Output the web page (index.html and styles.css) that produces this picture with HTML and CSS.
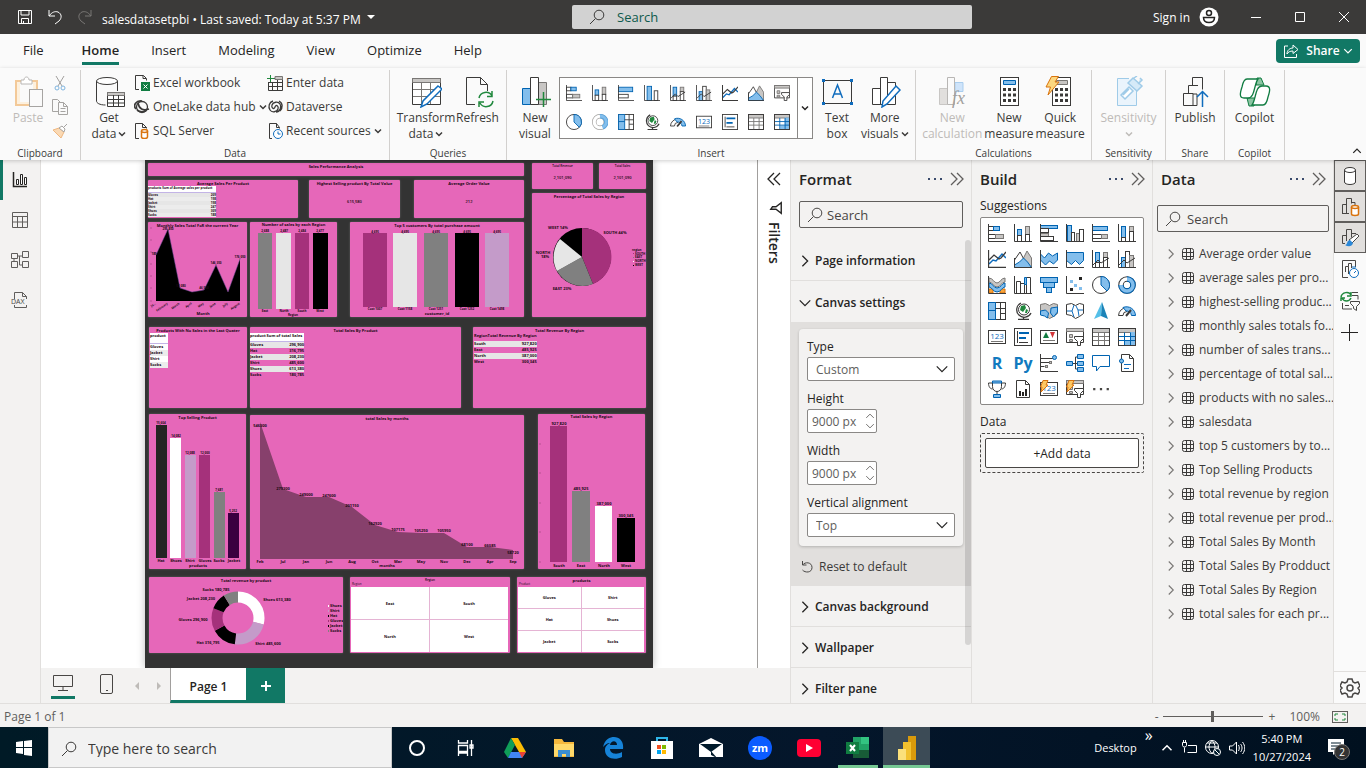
FILE: index.html
```html
<!DOCTYPE html>
<html lang="en">
<head>
<meta charset="utf-8">
<title>salesdatasetpbi - Power BI Desktop</title>
<link rel="stylesheet" href="styles.css">
</head>
<body>
<svg class="defs" aria-hidden="true">
  <symbol id="chev-r" viewBox="0 0 16 16"><path class="cur" d="M5 2l6 6-6 6"/></symbol>
  <symbol id="chev-d" viewBox="0 0 16 16"><path class="cur" d="M2 5l6 6 6-6"/></symbol>
  <symbol id="chev-u" viewBox="0 0 16 16"><path class="cur" d="M2 11l6-6 6 6"/></symbol>
  <symbol id="dbl-r" viewBox="0 0 16 16"><path class="cur" d="M2 2l6 6-6 6M8 2l6 6-6 6"/></symbol>
  <symbol id="dbl-l" viewBox="0 0 16 16"><path class="cur" d="M8 2L2 8l6 6M14 2L8 8l6 6"/></symbol>
  <symbol id="dots3" viewBox="0 0 16 16"><path d="M1 7h2v2H1zM7 7h2v2H7zM13 7h2v2h-2z" fill="currentColor"/></symbol>
  <symbol id="mag" viewBox="0 0 16 16"><circle class="cur" cx="10" cy="6" r="4.8"/><path class="cur" d="M6.500 9.500L1 15"/></symbol>
  <symbol id="funnel" viewBox="0 0 16 16"><path class="cur" d="M2 2h12L9.500 8v6l-3-2V8z"/></symbol>
  <symbol id="db" viewBox="0 0 20 20"><path d="M4.500 4v12c0 1.500 2.500 2.500 5.500 2.500s5.500-1 5.500-2.500V4" fill="#fff" stroke="#3b3a39"/><ellipse cx="10" cy="4" rx="5.500" ry="2.500" fill="#fff" stroke="#3b3a39"/></symbol>
  <symbol id="tbl" viewBox="0 0 14 14"><rect class="k" x="1.500" y="1.500" width="11" height="11" rx="2"/><path class="k" d="M5.500 1v12M9.500 1v12M1 5.500h12M1 9.500h12"/></symbol>

  <symbol id="bar-stack" viewBox="0 0 18 18"><rect class="w" x=".5" y="2.500" width="5" height="4"/><rect class="b" x="5.500" y="2.500" width="6" height="4"/><rect class="w" x=".5" y="10.500" width="7" height="4"/><rect class="g" x="7.500" y="10.500" width="8" height="4"/><path class="k" d="M.5 0v17.500H18"/></symbol>
  <symbol id="col-stack" viewBox="0 0 18 18"><rect class="b" x="3.500" y="5.500" width="4" height="6"/><rect class="w" x="3.500" y="11.500" width="4" height="6"/><rect class="g" x="11.500" y="2.500" width="4" height="8"/><rect class="w" x="11.500" y="10.500" width="4" height="7"/><path class="k" d="M.5 0v17.500H18"/></symbol>
  <symbol id="bar-clus" viewBox="0 0 18 18"><rect class="b" x=".5" y="1.500" width="17" height="3"/><rect class="w" x=".5" y="4.500" width="8" height="4"/><rect class="g" x=".5" y="9.500" width="8" height="3"/><rect class="w" x=".5" y="12.500" width="13" height="4"/><path class="k" d="M.5 0v17.500H18"/></symbol>
  <symbol id="col-clus" viewBox="0 0 18 18"><rect class="b" x="1.500" y="1.500" width="4" height="16"/><rect class="w" x="5.500" y="8.500" width="3" height="9"/><rect class="g" x="10.500" y="9.500" width="3" height="8"/><rect class="w" x="13.500" y="5.500" width="4" height="12"/><path class="k" d="M.5 0v17.500H18"/></symbol>
  <symbol id="bar-simple" viewBox="0 0 18 18"><rect class="b" x=".5" y="2.500" width="16" height="5"/><rect class="w" x=".5" y="10.500" width="11" height="4"/><path class="k" d="M.5 0v17.500H18"/></symbol>
  <symbol id="col-simple" viewBox="0 0 18 18"><rect class="b" x="3.500" y="1.500" width="5" height="16"/><rect class="w" x="11.500" y="6.500" width="4" height="11"/><path class="k" d="M.5 0v17.500H18"/></symbol>
  <symbol id="bar-100" viewBox="0 0 18 18"><rect class="b" x=".5" y="2.500" width="15" height="4"/><rect class="w" x=".5" y="10.500" width="9" height="4"/><rect class="g" x="9.500" y="10.500" width="6" height="4"/><path class="k" d="M.5 0v17.500H18"/></symbol>
  <symbol id="col-100" viewBox="0 0 18 18"><rect class="b" x="3.500" y="2.500" width="4" height="11"/><rect class="w" x="3.500" y="13.500" width="4" height="4"/><rect class="g" x="11.500" y="2.500" width="4" height="5"/><rect class="w" x="11.500" y="7.500" width="4" height="10"/><path class="k" d="M.5 0v17.500H18"/></symbol>
  <symbol id="line" viewBox="0 0 18 18"><path class="bl" d="M1 14l4-4 3 1 6-7 4 4" stroke-width="1.500"/><path class="k" d="M1 10l5-5 5 4 2-1 5-6M.5 0v17.500H18" stroke-width="1.300"/></symbol>
  <symbol id="area" viewBox="0 0 18 18"><path class="g" d="M9 9l4-8 4.500 7v9H11z"/><path class="w" d="M.5 10L6 2l8 15H.5z"/><path class="b" d="M.5 15l5-3 4-4 4 4 4 5.500H.5z"/><path class="k" d="M.5 8v9.500H18"/></symbol>
  <symbol id="area-stack" viewBox="0 0 18 18"><path class="b" d="M.5 4l4 4 4-5 4 3 5-3v7l-4 4-4-3-4 4-5-5z"/><path class="k" d="M.5 0v17.500H18"/></symbol>
  <symbol id="area-100" viewBox="0 0 18 18"><path class="b" d="M.5 2.500h17v8l-4 4-4-4-4 4-5-4z"/><path class="k" d="M.5 0v17.500H18"/></symbol>
  <symbol id="combo1" viewBox="0 0 18 18"><rect class="b" x="3.500" y="2.500" width="4" height="10"/><rect class="w" x="3.500" y="12.500" width="4" height="5"/><rect class="g" x="11.500" y="2.500" width="4" height="5"/><rect class="w" x="11.500" y="7.500" width="4" height="10"/><path class="k" d="M1 15l5-5 3 3 8-5M.5 0v17.500H18"/></symbol>
  <symbol id="combo2" viewBox="0 0 18 18"><rect class="b" x="3.500" y="7.500" width="4" height="10"/><rect class="w" x="7.500" y="1.500" width="4" height="16"/><rect class="g" x="11.500" y="5.500" width="4" height="12"/><path class="k" d="M1 15l5-5 3 3 8-5M.5 0v17.500H18"/></symbol>
  <symbol id="ribbonc" viewBox="0 0 18 18"><path d="M1 13h4v4H1zM12 13h5v4h-5z" fill="#f7a43c" stroke="#d9730d"/><path class="g" d="M1 2c4 0 5 5 8 5s4-5 8-5v4c-4 0-4 5-8 5S5 6 1 6z"/><path class="b" d="M1 7c4 0 4 5 8 5s5-5 8-5v4c-3 0-4 5-8 5s-5-5-8-5z"/><path class="k" d="M.5 0v17.500H18"/></symbol>
  <symbol id="waterfall" viewBox="0 0 18 18"><path class="w" d="M2.500 5.500h4v12h-4zM6.500 7.500h4v10M12.500 1.500h4v16h-4z"/><path class="b" d="M10.500 1.500h2v7h-2z"/><path class="k" d="M.5 0v17.500H18"/></symbol>
  <symbol id="funnelc" viewBox="0 0 18 18"><rect class="b" x=".5" y="1.500" width="17" height="5"/><rect class="b" x="3.500" y="6.500" width="11" height="5"/><rect class="b" x="6.500" y="11.500" width="5" height="5"/></symbol>
  <symbol id="scatter" viewBox="0 0 18 18"><path class="k" d="M.5 0v17.500H18"/><path fill="#83beec" d="M4 4h3v3H4zM8 8h3v3H8zM13 11h3v3h-3z"/><path fill="#252423" d="M13 1h3v3h-3zM4 12h3v3H4z"/></symbol>
  <symbol id="pie" viewBox="0 0 18 18"><circle class="w" cx="9" cy="9" r="8.500"/><path class="b" d="M9 .5A8.500 8.500 0 0 1 15 15L9 9z"/></symbol>
  <symbol id="donut" viewBox="0 0 18 18"><circle cx="9" cy="9" r="6" fill="none" stroke="#3b3a39" stroke-width="5.500"/><circle cx="9" cy="9" r="6" fill="none" stroke="#fff" stroke-width="3.500"/><path d="M9 3A6 6 0 1 1 3 9" fill="none" stroke="#0063b1" stroke-width="5.500"/><path d="M9 3A6 6 0 1 1 3 9" fill="none" stroke="#83beec" stroke-width="3.500"/></symbol>
  <symbol id="donut-light" viewBox="0 0 18 18"><circle cx="9" cy="9" r="6.500" fill="none" stroke="#a19f9d" stroke-width="5"/><circle cx="9" cy="9" r="6.500" fill="none" stroke="#fff" stroke-width="3.500"/><path d="M9 2.500A6.500 6.500 0 0 1 12 15" fill="none" stroke="#5da5dd" stroke-width="5"/><path d="M9 2.500A6.500 6.500 0 0 1 12 15" fill="none" stroke="#83beec" stroke-width="3"/></symbol>
  <symbol id="tree" viewBox="0 0 18 18"><rect class="w" x=".5" y=".5" width="17" height="17"/><path class="b" d="M.5.500h7v17h-7z"/><path d="M.5 8.500h7" stroke="#0063b1"/><path class="k" d="M7.500 6.500h10M12.500 6.500v11M12.500 11.500h5M12.500.500v6"/></symbol>
  <symbol id="globe" viewBox="0 0 18 18"><circle class="w" cx="10" cy="7.500" r="5.500"/><path d="M7 4l4-1 1 3-3 4-3-2zM12 7l2 1-1 3h-2z" fill="#20883d"/><path class="k" d="M7 1a7.500 7.500 0 1 0 10 10M9.500 15v2M4 17.500h11" stroke-width="1.300"/></symbol>
  <symbol id="map" viewBox="0 0 18 18"><path class="g" d="M.5 2.500l5-1 4 2 4-2 4 1v9l-4 3-4 2-4-3-5-1z"/><path class="b" d="M.5 9l5-1 3 3-1 5-3-2-4-1zM11 6l6.500-1v5l-4 5-3-4z"/></symbol>
  <symbol id="shapemap" viewBox="0 0 18 18"><path class="w" d="M.5 2.500l5-1 4 2 4-2 4 1v9l-4 3-4 2-4-3-5-1z"/><path class="bl" d="M1 9h5l2-6M6 9l2 6M17 8h-5l-2-4M12 8l1 6"/></symbol>
  <symbol id="azure" viewBox="0 0 18 18"><path d="M10 0L2 17l7-3z" fill="#54bfe8"/><path d="M10 0l6 17-7-3z" fill="#1b83b8"/></symbol>
  <symbol id="gauge" viewBox="0 0 18 18"><path class="w" d="M.5 13.500a8.500 8.500 0 0 1 8.500-8v4a4 4 0 0 0-4 4z"/><path class="b" d="M5 5.500a9 9 0 0 1 12.500 8h-4A5 5 0 0 0 8 9z"/><path class="k" d="M8 14l5-6" stroke-width="2"/></symbol>
  <symbol id="card" viewBox="0 0 18 18"><rect class="w" x=".5" y="2.500" width="17" height="13"/><text x="9" y="11" text-anchor="middle" class="n123">123</text><path d="M3 13.500h12" stroke="#797775"/></symbol>
  <symbol id="mrow" viewBox="0 0 18 18"><rect class="w" x=".5" y=".5" width="17" height="17"/><path class="k" d="M3.500 3v12"/><path d="M5 5h10M5 10h7" stroke="#0063b1" stroke-width="2"/><path class="k" d="M5 14.500h9"/></symbol>
  <symbol id="kpi" viewBox="0 0 18 18"><rect class="w" x=".5" y="2.500" width="17" height="13"/><path d="M3 10l3-6 3 6z" fill="#107c41"/><path d="M10 4h5l-2.500 6z" fill="#d13438"/><path d="M3 12.500h12" stroke="#797775"/></symbol>
  <symbol id="slicer" viewBox="0 0 18 18"><path class="w" d="M.5.500h17v14H.5z"/><path class="g" d="M.5.500h17v3H.5zM3.500 6.500h3v3h-3zM3.500 11.500h3v2h-3z"/><path class="w" d="M8.500 8.500h9v2l-3 3v4h-3v-4l-3-3z"/></symbol>
  <symbol id="grid" viewBox="0 0 18 18"><rect class="w" x=".5" y=".5" width="17" height="17"/><path class="g" d="M.5.500h17v4H.5z"/><path d="M6.500 4.500v13M12.500 4.500v13M.5 8.500h17M.5 12.500h17" stroke="#797775"/><rect class="k" x=".5" y=".5" width="17" height="17"/></symbol>
  <symbol id="matrix" viewBox="0 0 18 18"><rect class="w" x=".5" y=".5" width="17" height="17"/><path class="g" d="M.5.500h17v4H.5z"/><path fill="#83beec" d="M12 4h5v13H7v-4h5z"/><path d="M6.500 4.500v13M12.500 4.500v13M.5 8.500h17M.5 12.500h17" stroke="#0063b1"/><rect class="k" x=".5" y=".5" width="17" height="17"/></symbol>
  <symbol id="ki" viewBox="0 0 18 18"><path class="k" d="M.5 0v17.500H18M.5 4.500h13M.5 8.500h9M.5 12.500h4"/><circle class="b" cx="14.500" cy="3.500" r="2"/><rect class="g" x="9.500" y="7.500" width="2" height="2"/><rect class="g" x="5.500" y="11.500" width="2" height="2"/></symbol>
  <symbol id="decomp" viewBox="0 0 18 18"><path class="k" d="M6 9.500h6M9.500 3v12M9.500 3H12M9.500 15H12"/><path class="b" d="M.5 7.500h6v4h-6zM11.500.500h6v4h-6zM11.500 7.500h6v4h-6zM11.500 13.500h6v4h-6z"/></symbol>
  <symbol id="qna" viewBox="0 0 18 18"><path d="M.5 1.500h17v11H8L4.500 17v-4.500h-4z" fill="#fff" stroke="#0063b1"/></symbol>
  <symbol id="narr" viewBox="0 0 18 18"><path class="w" d="M3.500.500h8l4 4v13h-12z"/><path class="k" d="M11.500.500v4h4"/><circle class="b" cx="3.500" cy="7" r="2"/><path class="bl" d="M6 10.500h7M6 14.500h5"/></symbol>
  <symbol id="cup" viewBox="0 0 18 18"><path class="w" d="M4.500 1.500h9v5c0 3-2 5-4.500 5s-4.500-2-4.500-5zM4.500 3H.5c0 4 2 6 4 6M13.500 3h4c0 4-2 6-4 6M9 11.500v3"/><path class="b" d="M4.500 1h9v2h-9zM5.500 14.500h7v3h-7z"/></symbol>
  <symbol id="pag" viewBox="0 0 18 18"><path class="w" d="M2.500.500h9l4 4v13h-13z"/><path class="k" d="M11.500.500v4h4"/><path d="M5 11h2v5H5zM8 12h2v4H8zM11 9h2v7h-2z" fill="#252423"/></symbol>
  <symbol id="appcard" viewBox="0 0 18 18"><use href="#card"/><path d="M3 .5h5L6 5h2L1 12l1-5H.5z" fill="#fcc865" stroke="#d9730d"/></symbol>
  <symbol id="appslicer" viewBox="0 0 18 18"><use href="#slicer"/><path d="M3 .5h5L6 5h2L1 12l1-5H.5z" fill="#fcc865" stroke="#d9730d"/></symbol>
</svg>

<header class="titlebar">
  <div class="tb-left">
    <button class="tb-btn" aria-label="Save"><svg class="i16" viewBox="0 0 16 16"><path class="cur" d="M1.500 1.500h13v13h-13zM4 1.500V6h8V1.500M4.500 14.500v-5h7v5M6.500 12v2"/></svg></button>
    <button class="tb-btn" aria-label="Undo"><svg class="i16" viewBox="0 0 16 16"><path class="cur" d="M2 1v6h6M2 7c3-4 6-5 9-4 4 2 4 6 1 9l-4 3"/></svg></button>
    <button class="tb-btn dim" aria-label="Redo"><svg class="i16" viewBox="0 0 16 16"><path class="cur" d="M14 1v6H8M14 7c-3-4-6-5-9-4-4 2-4 6-1 9l4 3"/></svg></button>
    <span class="doc">salesdatasetpbi • Last saved: Today at 5:37 PM</span>
    <svg class="tri" viewBox="0 0 8 4"><path d="M0 0h8L4 4z" fill="#fff"/></svg>
  </div>
  <label class="tb-search"><svg class="i16"><use href="#mag"/></svg><input type="text" placeholder="Search" aria-label="Search"></label>
  <div class="tb-right">
    <a href="#" class="signin">Sign in</a>
    <svg class="i20" viewBox="0 0 20 20"><circle cx="10" cy="10" r="9.500" fill="#fff"/><circle cx="10" cy="6" r="2.500" fill="none" stroke="#252423" stroke-width="1.500"/><path d="M4.500 10.500h11c0 3-2 5-5.500 5s-5.500-2-5.500-5z" fill="none" stroke="#252423" stroke-width="1.500"/></svg>
    <button class="win" aria-label="Minimize"><svg class="i12" viewBox="0 0 12 12"><path class="cur" d="M1 6.500h10"/></svg></button>
    <button class="win" aria-label="Maximize"><svg class="i12" viewBox="0 0 12 12"><path class="cur" d="M1.500 1.500h9v9h-9z"/></svg></button>
    <button class="win" aria-label="Close"><svg class="i12" viewBox="0 0 12 12"><path class="cur" d="M1 1l10 10M11 1L1 11"/></svg></button>
  </div>
</header>

<nav class="tabs">
  <a href="#">File</a><a href="#" class="on">Home</a><a href="#">Insert</a><a href="#">Modeling</a><a href="#">View</a><a href="#">Optimize</a><a href="#">Help</a>
  <button class="share"><svg class="i16" viewBox="0 0 16 16"><path class="cur" d="M5 3H1.500v11.500h12V11M4 11c0-4 3-6 6-6V2l5 4.500-5 4V8C7 8 5 9 4 11z"/></svg>Share<svg class="i10"><use href="#chev-d"/></svg></button>
</nav>

<section class="ribbon">
  <div class="grp g-clip"><div class="row">
    <button class="big off"><svg class="i32" viewBox="0 0 32 32"><path d="M4 5h21v24H4z" fill="#fdf0dd" stroke="#f3c998" stroke-width="2"/><path d="M8 7h13v19H8z" fill="#fafafa"/><path d="M9 8V4h3c0-4 5-4 5 0h3v4z" fill="#fff" stroke="#b8b6b4"/><rect x="17.500" y="13.500" width="13" height="17" fill="#fafafa" stroke="#a6a4a2"/></svg>Paste</button>
    <div class="col minis">
      <button class="mini" aria-label="Cut"><svg class="i16" viewBox="0 0 16 16"><path d="M4 1l6 10M12 1L6 11" stroke="#a19f9d"/><circle cx="5" cy="13" r="2" fill="none" stroke="#7fb4df"/><circle cx="11" cy="13" r="2" fill="none" stroke="#7fb4df"/></svg></button>
      <button class="mini" aria-label="Copy"><svg class="i16" viewBox="0 0 16 16"><path d="M6 12.500H.5v-12h5l3 3M6.500 3.500h5l4 4v8h-9zM11.500 3.500v4h4M8.500 9.500h5M8.500 12.500h5" fill="none" stroke="#a6a4a2"/></svg></button>
      <button class="mini" aria-label="Format painter"><svg class="i16" viewBox="0 0 16 16"><path d="M1 7l6-2 5 4-3 6z" fill="#fad9b4" stroke="#efb780"/><path d="M7 5l3-2 3 3-1 3zM12 4l3-3" fill="#fff" stroke="#a6a4a2"/></svg></button>
    </div></div><h2>Clipboard</h2></div>
  <div class="grp g-data"><div class="row">
    <button class="big"><svg class="i32" viewBox="0 0 32 32"><path class="k" d="M3.500 5v20c0 2 3 4 9 4M24.500 5v10"/><ellipse class="w" cx="14" cy="5" rx="10.500" ry="3.500"/><path class="w" d="M14.500 16.500h17v14h-17z"/><path class="g" d="M14.500 16.500h17v3h-17z"/><path class="k" d="M20.500 19v11M25.500 19v11M14.500 23.500h17M14.500 27h17"/></svg>Get<br>data<svg class="i8"><use href="#chev-d"/></svg></button>
    <div class="col c1">
      <button class="small"><svg class="i16" viewBox="0 0 16 16"><path class="k" d="M5 14.500H1.500V.500h8l3 3v2M9 .5v3h3"/><rect x="7" y="7" width="9" height="9" fill="#107c41"/><path d="M9.500 9.500l4 4M13.500 9.500l-4 4" stroke="#fff"/></svg>Excel workbook</button>
      <button class="small"><svg class="i16" viewBox="0 0 16 16"><circle cx="8" cy="8" r="5.500" fill="none" stroke="#3b3a39" stroke-width="1.300"/><path d="M2 10a6 5 0 0 1 6-8M4 4c1 6 5 8 11 6M3 11c4 3 9 2 10-1" fill="none" stroke="#3b3a39" stroke-width="1.700"/></svg>OneLake data hub<svg class="i8"><use href="#chev-d"/></svg></button>
      <button class="small"><svg class="i16" viewBox="0 0 16 16"><path class="k" d="M5 15.500H1.500V.500h7l4 4v1M8.500.500v4h4"/><path d="M7.500 8v6c0 2 6 2 6 0V8" fill="#fff" stroke="#d9730d" stroke-width="1.500"/><ellipse cx="10.500" cy="8" rx="3" ry="1.500" fill="#fff" stroke="#d9730d" stroke-width="1.500"/></svg>SQL Server</button>
    </div>
    <div class="col">
      <button class="small"><svg class="i16" viewBox="0 0 16 16"><path class="k" d="M4 3.500h11.500v12h-14V7M5.500 7v8M10.500 3.500v12M1.500 7.500h14M1.500 11.500h14"/><path class="g" d="M8 1.500h7.500v3H8z"/><path d="M3.500 0v7M0 3.500h7" stroke="#20883d"/></svg>Enter data</button>
      <button class="small"><svg class="i16" viewBox="0 0 16 16"><path d="M8 8c-1 3-4 1-3-2s6-4 8-1 0 8-4 8M8 8c1-3 4-1 3 2s-6 4-8 1-1-8 3-9M12 2c4 2 4 7 1 10" fill="none" stroke="#3b3a39" stroke-width="1.300"/></svg>Dataverse</button>
      <button class="small"><svg class="i16" viewBox="0 0 16 16"><path class="k" d="M5 15.500H2.500V.500h7l3 4v1M9.500.500v4h3"/><circle cx="11" cy="11" r="4.500" fill="#fff" stroke="#0f6cbd"/><path d="M11 8.500V11h2.500" fill="none" stroke="#0f6cbd"/></svg>Recent sources<svg class="i8"><use href="#chev-d"/></svg></button>
    </div></div><h2>Data</h2></div>
  <div class="grp g-query"><div class="row">
    <button class="big"><svg class="i32" viewBox="0 0 32 32"><path class="w" d="M2.500 2.500h28v26h-28z"/><path class="g" d="M2.500 2.500h28v4h-28z"/><path d="M11.500 7v21M20.500 7v21M3 13.500h27M3 20.500h27" stroke="#797775"/><path d="M28 10l4 3-15 15-6 3 2-6z" fill="#fff" stroke="#0f6cbd" stroke-width="1.500"/></svg>Transform<br>data<svg class="i8"><use href="#chev-d"/></svg></button>
    <button class="big"><svg class="i32" viewBox="0 0 32 32"><path class="k" d="M13 28.500H4.500v-27h14l7 7V15M18.500 1.500v7h7"/><path d="M17 22a7 7 0 0 1 13-2M30 15v5.500h-5M31 25a7 7 0 0 1-13 2M17 31v-5h5" fill="none" stroke="#20883d" stroke-width="1.500"/></svg>Refresh</button>
  </div><h2>Queries</h2></div>
  <div class="grp g-insert"><div class="row">
    <button class="big"><svg class="i32" viewBox="0 0 32 32"><path class="b" d="M3.500 12.500h9v16h-9z"/><path class="g" d="M19.500 6.500h8v22h-8z"/><path class="w" d="M11.500 1.500h8v27h-8z"/><path d="M24.500 16v15M17 23.500h15" stroke="#20883d" stroke-width="1.500"/></svg>New<br>visual</button>
    <div class="gallery"><div class="gal">
      <svg><use href="#bar-stack"/></svg><svg><use href="#col-stack"/></svg><svg><use href="#bar-simple"/></svg><svg><use href="#col-simple"/></svg><svg><use href="#combo1"/></svg><svg><use href="#combo2"/></svg><svg><use href="#line"/></svg><svg><use href="#area"/></svg><svg><use href="#slicer"/></svg>
      <svg><use href="#pie"/></svg><svg><use href="#donut-light"/></svg><svg><use href="#tree"/></svg><svg><use href="#globe"/></svg><svg><use href="#gauge"/></svg><svg><use href="#card"/></svg><svg><use href="#mrow"/></svg><svg><use href="#grid"/></svg><svg><use href="#matrix"/></svg>
    </div><button class="more" aria-label="More visuals"><svg class="i8"><use href="#chev-d"/></svg></button></div>
    <button class="big b-text"><svg class="i32" viewBox="0 0 32 32"><rect class="k" x="2.500" y="4.500" width="28" height="23"/><path d="M1 3h3v3H1zM29 3h3v3h-3zM1 26h3v3H1zM29 26h3v3h-3z" fill="#0f6cbd"/><path d="M11.500 22l5-13 5 13M13 18h7" fill="none" stroke="#0f6cbd" stroke-width="1.500"/></svg>Text<br>box</button>
    <button class="big"><svg class="i32" viewBox="0 0 32 32"><path class="w" d="M3.500 12.500h8v16h-8zM18.500 6.500h8v22h-8zM11.500 1.500h7v27h-7z"/><path d="M27 10l4 4-13 14-5 3 1-6z" fill="#fff" stroke="#0f6cbd" stroke-width="1.500"/></svg>More<br>visuals<svg class="i8"><use href="#chev-d"/></svg></button>
  </div><h2>Insert</h2></div>
  <div class="grp g-calc"><div class="row">
    <button class="big off"><svg class="i32" viewBox="0 0 32 32"><path d="M3.500 12.500h8v16h-8z" fill="#e1dfdd" stroke="#c8c6c4"/><path d="M19 6.500h8v9h-8z" fill="#cfe4fa" stroke="#a9cdee"/><path d="M11.500 1.500h7v27h-7z" fill="#fafafa" stroke="#b8b6b4"/><text x="16" y="28" class="fx">fx</text></svg>New<br>calculation</button>
    <button class="big"><svg class="i32" viewBox="0 0 32 32"><rect class="w" x="7.500" y="1.500" width="18" height="28"/><path class="b" d="M10.500 4.500h12v4h-12z"/><path d="M11.500 12v14M16.500 12v14M21.500 12v14" stroke="#3b3a39" stroke-width="3" stroke-dasharray="3 2.500"/></svg>New<br>measure</button>
    <button class="big"><svg class="i32" viewBox="0 0 32 32"><rect class="w" x="8.500" y="1.500" width="18" height="28"/><path class="g" d="M12.500 4.500h11v4h-11z"/><path d="M12.500 12v14M17.500 12v14M22.500 12v14" stroke="#3b3a39" stroke-width="3" stroke-dasharray="3 2.500"/><path d="M7.500.500h7L11 6h4L4 19l2.500-8H2z" fill="#fcd77f" stroke="#d9730d"/></svg>Quick<br>measure</button>
  </div><h2>Calculations</h2></div>
  <div class="grp g-sens"><div class="row"><button class="big off"><svg class="i32" viewBox="0 0 32 32"><path d="M17 2.500H5.500v27h19V15" fill="#eaf4fc" stroke="#9fcbe8"/><path d="M9 19l8-8 4 4-8 8zM11 19l6-6" fill="#fff" stroke="#9fcbe8" stroke-width="1.500"/><path d="M16 7l5-5 9 8-5 5zM22 2l3-2M28 2l2 2-4 4" fill="#d5eaf8" stroke="#9fcbe8" stroke-width="1.500"/></svg>Sensitivity<br><svg class="i8"><use href="#chev-d"/></svg></button></div><h2>Sensitivity</h2></div>
  <div class="grp g-share"><div class="row"><button class="big"><svg class="i32" viewBox="0 0 32 32"><path class="k" d="M14 29.500H4.500v-12h9.500v12zM9.500 17v-7.500H19M13.500 9.500v-8h10v12M14 18h4v11.500h-4"/><path d="M23.500 31V16M18 21l5.500-5.500L29 21" fill="none" stroke="#0f6cbd" stroke-width="1.500"/></svg>Publish</button></div><h2>Share</h2></div>
  <div class="grp g-cop"><div class="row"><button class="big"><svg class="i32" viewBox="0 0 32 32"><path d="M18 2h4l3 7h-8zM8 22h9l-2 8h-5z" fill="#8cc5a3" stroke="#107c41"/><path d="M8 3h11c-4 5-3 19-10 19H5c-5 0-4-5-2-11 1-5 2-8 5-8zM24 29H13c4-5 3-19 10-19h4c5 0 4 5 2 11-1 5-2 8-5 8z" fill="#fff" stroke="#107c41" stroke-width="1.300"/></svg>Copilot</button></div><h2>Copilot</h2></div>
  <button class="collapse" aria-label="Collapse ribbon"><svg class="i10"><use href="#chev-u"/></svg></button>
</section>

<main>
  <nav class="rail">
    <button class="on" aria-label="Report view"><svg class="i16" viewBox="0 0 16 16"><path d="M1.500 0v14.500H15" fill="none" stroke="#252423" stroke-width="1.500"/><path d="M4.500 7.500h2v5h-2zM8.500 2.500h2v10h-2zM12.500 5.500h2v7h-2z" fill="#fff" stroke="#252423"/></svg></button>
    <button aria-label="Table view"><svg class="i16" viewBox="0 0 16 16"><path d="M.5.500h15v15H.5zM.5 4.500h15M.5 10h15M5.500 4.500v11M10.500 4.500v11" fill="none" stroke="#605e5c"/></svg></button>
    <button aria-label="Model view"><svg class="i18" viewBox="0 0 18 18"><path d="M.5 2.500h6v5h-6zM11.500.500h6v6h-6zM11.500 10.500h6v6h-6zM.5 10.500h6v6h-6zM6.500 5h5M8.500 5v9h3M3 8v2" fill="none" stroke="#605e5c"/></svg></button>
    <button aria-label="DAX query view"><svg class="i18" viewBox="0 0 18 18"><path d="M3.500 8V1.500h8l4 4V8M11.500 1.500v4h4M3.500 14v2.500h12V14" fill="none" stroke="#605e5c"/><text x="0" y="13" class="dax">DAX</text></svg></button>
  </nav>
  <div class="work">
    <div class="stage-row">
      <div class="stage">
        <div class="report">
          <article class="tile t1"><h3>Sales Performance Analysis</h3></article>
          <article class="tile t2"><h3>Average Sales Per Product</h3>
            <table class="avg"><tr><th>products</th><th>Sum of Average sales per product</th></tr><tr><td>Gloves</td><td>209</td></tr><tr><td>Hat</td><td>198</td></tr><tr><td>Jacket</td><td>198</td></tr><tr><td>Shirt</td><td>247</td></tr><tr><td>Shoes</td><td>309</td></tr><tr><td>Socks</td><td>188</td></tr></table></article>
          <article class="tile t3 kpi"><h3>Highest Selling product By Total Value</h3><p>615,580</p></article>
          <article class="tile t4 kpi"><h3>Average Order Value</h3><p>212</p></article>
          <article class="tile t5 kpi low"><h3 class="lt">Total Revenue</h3><p>2,101,090</p></article>
          <article class="tile t6 kpi low"><h3 class="lt">Total Sales</h3><p>2,101,090</p></article>
          <article class="tile t7"><h3>Monthly Sales Total FoR the current Year</h3>
            <svg viewBox="148 222 99 95"><path d="M156 255l12-26 12 59 12 4 12-2 12-25 12 27 12-33v42h-84z"/><path d="M156 255l12-26 12 59 12 4 12-2 12-25 12 27 12-33" fill="none" stroke="#6b4a9a" stroke-width=".5"/>
            <g class="t s"><text x="168" y="230">295,850</text><text x="154" y="255">189</text><text x="181" y="287">51,080</text><text x="204" y="289">46,500</text><text x="216" y="264">146,350</text><text x="240" y="258">176,050</text><text x="203" y="315" class="n">Month</text></g>
            <g class="t s e"><text transform="translate(156 304) rotate(-35)">Ja...</text><text transform="translate(168 304) rotate(-35)">February</text><text transform="translate(180 304) rotate(-35)">March</text><text transform="translate(192 304) rotate(-35)">April</text><text transform="translate(204 304) rotate(-35)">May</text><text transform="translate(216 304) rotate(-35)">June</text><text transform="translate(228 304) rotate(-35)">July</text><text transform="translate(240 304) rotate(-35)">August</text></g>
            <path d="M150 228h2M150 240h2M150 252h2M150 264h2M150 276h2M150 288h2M150 301h2" stroke="#8a3d6d" stroke-width=".5"/></svg></article>
          <article class="tile t8"><h3 class="tight">Number of sales by each Region</h3>
            <svg viewBox="250 222 87 95"><path d="M258 233h14v76h-14z" fill="#808080"/><path d="M276 233h15v76h-15z" fill="#e6e6e6"/><path d="M295 233h14v76h-14z" fill="#a5317b"/><path d="M313 233h15v76h-15z"/>
            <g class="t s"><text x="265" y="232">2,688</text><text x="284" y="232">2,487</text><text x="302" y="232">2,484</text><text x="320" y="232">2,477</text><text x="265" y="312">East</text><text x="284" y="312">North</text><text x="302" y="312">South</text><text x="320" y="312">West</text><text x="293" y="316">Region</text></g></svg></article>
          <article class="tile t9"><h3>Top 5 customers By total purchase amount</h3>
            <svg viewBox="350 222 174 95"><path d="M363 233h24v74h-24z" fill="#a5317b"/><path d="M393 233h24v74h-24z" fill="#e6e6e6"/><path d="M424 233h24v74h-24z" fill="#808080"/><path d="M455 233h24v74h-24z"/><path d="M485 233h24v74h-24z" fill="#c49bc9"/>
            <g class="t s"><text x="375" y="233">4,695</text><text x="405" y="233">4,695</text><text x="436" y="233">4,695</text><text x="467" y="233">4,695</text><text x="497" y="233">4,695</text><text x="375" y="310">Cust 1007</text><text x="405" y="310">Cust 1158</text><text x="436" y="310">Cust 1251</text><text x="467" y="310">Cust 1252</text><text x="497" y="310">Cust 1498</text><text x="437" y="315" class="n">customer_id</text></g></svg></article>
          <article class="tile t10"><h3>Percentage of Total Sales by Region</h3>
            <svg viewBox="532 193 114 124"><circle cx="582" cy="257" r="29"/><path d="M582 257V228A29 29 0 0 1 593 284z" fill="#a5317b"/><path d="M582 257L593 284A29 29 0 0 1 557 271z" fill="#808080"/><path d="M582 257L557 271A29 29 0 0 1 560 239z" fill="#e6e6e6"/>
            <g class="t"><text x="558" y="229">WEST 14%</text><text x="615" y="234">SOUTH 44%</text><text x="543" y="254">NORTH</text><text x="545" y="258">18%</text><text x="562" y="290">EAST 23%</text></g>
            <g class="t s l"><text x="632" y="251">region</text><text x="635" y="255">SOUTH</text><text x="635" y="258">EAST</text><text x="635" y="262">NORTH</text><text x="635" y="266">WEST</text></g><path d="M633 253h1v1h-1z" fill="#a5317b"/><path d="M633 257h1v1h-1z" fill="#808080"/><path d="M633 261h1v1h-1z" fill="#fff"/><path d="M633 265h1v1h-1z"/></svg></article>
          <article class="tile t11"><h3>Products With No Sales in the Last Quater</h3>
            <table class="one"><tr><th>product</th></tr><tr><td>Gloves</td></tr><tr><td>Jacket</td></tr><tr><td>Shirt</td></tr><tr><td>Socks</td></tr></table></article>
          <article class="tile t12"><h3>Total Sales By Product</h3>
            <table class="two"><tr><th>product</th><th>Sum of total Sales</th></tr><tr><td>Gloves</td><td>296,900</td></tr><tr><td>Hat</td><td>316,795</td></tr><tr><td>Jacket</td><td>208,230</td></tr><tr><td>Shirt</td><td>485,600</td></tr><tr><td>Shoes</td><td>613,380</td></tr><tr><td>Socks</td><td>180,785</td></tr></table></article>
          <article class="tile t13"><h3>Total Revenue By Region</h3>
            <table class="two rev"><tr><th>Region</th><th>Total Revenue By Region</th></tr><tr><td>South</td><td>927,820</td></tr><tr><td>East</td><td>485,925</td></tr><tr><td>North</td><td>387,000</td></tr><tr><td>West</td><td>300,345</td></tr></table></article>
          <article class="tile t14"><h3>Top Selling Product</h3>
            <svg viewBox="149 414 97 155"><path d="M156 425h11v133h-11z" fill="#252423"/><path d="M170 438h11v120h-11z" fill="#fff"/><path d="M185 455h11v103h-11z" fill="#c49bc9"/><path d="M199 455h11v103h-11z" fill="#a5317b"/><path d="M214 492h11v66h-11z" fill="#808080"/><path d="M228 513h11v45h-11z" fill="#3a0040"/>
            <g class="t s"><text x="161" y="424">15,604</text><text x="176" y="437">14,082</text><text x="190" y="454">12,088</text><text x="205" y="454">12,000</text><text x="219" y="491">7,681</text><text x="233" y="512">5,252</text></g><g class="t"><text x="161" y="562">Hat</text><text x="176" y="562">Shoes</text><text x="190" y="562">Shirt</text><text x="205" y="562">Gloves</text><text x="219" y="562">Socks</text><text x="234" y="562">Jacket</text><text x="198" y="567">products</text></g></svg></article>
          <article class="tile t15"><h3>total Sales by months</h3>
            <svg viewBox="250 415 274 154"><path d="M260 422l23 67 23 8 23 0 23 10 23 18 23 7 23 1 23 0 23 14 23 0 23 3v9H260z" fill="#87406c"/>
            <g class="t"><text x="260" y="427">546300</text><text x="283" y="490">279300</text><text x="306" y="496">249000</text><text x="329" y="497">247600</text><text x="352" y="507">201150</text><text x="375" y="525">162920</text><text x="398" y="531">107175</text><text x="421" y="532">105250</text><text x="444" y="532">105950</text><text x="467" y="546">68100</text><text x="490" y="547">66085</text><text x="513" y="554">58720</text>
            <text x="260" y="563">Feb</text><text x="283" y="563">Jul</text><text x="306" y="563">Jan</text><text x="329" y="563">Jun</text><text x="352" y="563">Aug</text><text x="375" y="563">Oct</text><text x="398" y="563">Mar</text><text x="421" y="563">May</text><text x="444" y="563">Nov</text><text x="467" y="563">Dec</text><text x="490" y="563">Apr</text><text x="513" y="563">Sep</text><text x="387" y="567">months</text></g></svg></article>
          <article class="tile t16"><h3 class="tight">Total Sales by Region</h3>
            <svg viewBox="538 414 107 155"><path d="M550 426h17v136h-17z" fill="#a5317b"/><path d="M572 491h18v71h-18z" fill="#808080"/><path d="M595 506h17v56h-17z" fill="#fff"/><path d="M617 518h18v44h-18z"/><path d="M539 444h2M539 473h2M539 503h2M539 532h2M539 562h2" stroke="#8a3d6d" stroke-width=".5"/>
            <g class="t"><text x="559" y="425">927,820</text><text x="581" y="490">485,925</text><text x="604" y="505">387,000</text><text x="626" y="517">300,345</text><text x="559" y="567">South</text><text x="581" y="567">East</text><text x="604" y="567">North</text><text x="626" y="567">West</text></g></svg></article>
          <article class="tile t17"><h3>Total revenue by product</h3>
            <svg viewBox="149 577 194 76"><g fill="none" stroke-width="11" transform="rotate(-90 238 618)"><circle cx="238" cy="618" r="21" pathLength="100" stroke="#fff" stroke-dasharray="29 71"/><circle cx="238" cy="618" r="21" pathLength="100" stroke="#c49bc9" stroke-dasharray="23 77" stroke-dashoffset="-29"/><circle cx="238" cy="618" r="21" pathLength="100" stroke="#000" stroke-dasharray="15 85" stroke-dashoffset="-52"/><circle cx="238" cy="618" r="21" pathLength="100" stroke="#a5317b" stroke-dasharray="14 86" stroke-dashoffset="-67"/><circle cx="238" cy="618" r="21" pathLength="100" stroke="#000" stroke-dasharray="10 90" stroke-dashoffset="-81"/><circle cx="238" cy="618" r="21" pathLength="100" stroke="#808080" stroke-dasharray="9 91" stroke-dashoffset="-91"/></g>
            <g class="t"><text x="216" y="591">Socks 180,785</text><text x="201" y="600">Jacket 208,230</text><text x="193" y="621">Gloves 296,900</text><text x="208" y="644">Hat 316,795</text><text x="268" y="645">Shirt 485,600</text><text x="277" y="601">Shoes 613,380</text></g>
            <g class="t l"><text x="330" y="607">Shoes</text><text x="330" y="612">Shirt</text><text x="330" y="617">Hat</text><text x="330" y="622">Gloves</text><text x="330" y="627">Jacket</text><text x="330" y="632">Socks</text></g><path d="M328 605h1v2h-1z" fill="#fff"/><path d="M328 610h1v2h-1z" fill="#c49bc9"/><path d="M328 615h1v2h-1zM328 625h1v2h-1z"/><path d="M328 620h1v2h-1z" fill="#a5317b"/><path d="M328 630h1v2h-1z" fill="#808080"/></svg></article>
          <article class="tile t18 sl"><h3 class="lt">Region</h3><span class="cap">Region</span><div class="opts"><button>East</button><button>South</button><button>North</button><button>West</button></div></article>
          <article class="tile t19 sl"><h3>products</h3><span class="cap">Product</span><div class="opts"><button>Gloves</button><button>Shirt</button><button>Hat</button><button>Shoes</button><button>Jacket</button><button>Socks</button></div></article>
        </div>
      </div>
      <aside class="filters"><button aria-label="Expand filters"><svg class="i16"><use href="#dbl-l"/></svg></button><svg class="i14 turn"><use href="#funnel"/></svg><span>Filters</span></aside>
    </div>
    <div class="pages">
      <button class="dev on" aria-label="Desktop layout"><svg class="i20" viewBox="0 0 20 20"><path d="M.5 3.500h19v11H.5zM10 14.500v4M5 18.500h10" fill="none" stroke="#484644"/></svg></button>
      <button class="dev" aria-label="Mobile layout"><svg class="i20" viewBox="0 0 20 20"><rect x="3.500" y=".5" width="12" height="19" rx="1.500" fill="none" stroke="#484644"/><path d="M9 16.500h2" stroke="#484644"/></svg></button>
      <button class="nav" aria-label="Previous"><svg class="i8" viewBox="0 0 8 8"><path d="M6 0v8L2 4z" fill="#bebbb8"/></svg></button>
      <button class="nav" aria-label="Next"><svg class="i8" viewBox="0 0 8 8"><path d="M2 0v8l4-4z" fill="#bebbb8"/></svg></button>
      <button class="ptab">Page 1</button><button class="padd" aria-label="New page"><svg class="i12" viewBox="0 0 12 12"><path d="M6 1v10M1 6h10" stroke="#fff" stroke-width="2"/></svg></button>
    </div>
  </div>

  <aside class="pane format">
    <header><h2>Format</h2><svg class="i16 dots"><use href="#dots3"/></svg><svg class="i16"><use href="#dbl-r"/></svg></header>
    <label class="search"><svg class="i16"><use href="#mag"/></svg><input type="text" placeholder="Search" aria-label="Search format"></label>
    <div class="scroll">
      <button class="sec"><svg class="i14"><use href="#chev-r"/></svg>Page information</button>
      <button class="sec open"><svg class="i14"><use href="#chev-d"/></svg>Canvas settings</button>
      <div class="body">
        <div class="cardbox">
          <label for="ty">Type</label><div class="sel"><select id="ty"><option>Custom</option></select><svg class="i14"><use href="#chev-d"/></svg></div>
          <label for="he">Height</label><div class="num"><input id="he" type="text" value="9000 px"><span><svg class="i10"><use href="#chev-u"/></svg><svg class="i10"><use href="#chev-d"/></svg></span></div>
          <label for="wi">Width</label><div class="num"><input id="wi" type="text" value="9000 px"><span><svg class="i10"><use href="#chev-u"/></svg><svg class="i10"><use href="#chev-d"/></svg></span></div>
          <label for="va">Vertical alignment</label><div class="sel"><select id="va"><option>Top</option></select><svg class="i14"><use href="#chev-d"/></svg></div>
        </div>
        <button class="reset"><svg class="i12" viewBox="0 0 12 12"><path class="cur" d="M1.500 0v4h4M1.500 4C4 .5 11 1 11 6.500S4 12 1.500 9"/></svg>Reset to default</button>
      </div>
      <button class="sec"><svg class="i14"><use href="#chev-r"/></svg>Canvas background</button>
      <button class="sec"><svg class="i14"><use href="#chev-r"/></svg>Wallpaper</button>
      <button class="sec last"><svg class="i14"><use href="#chev-r"/></svg>Filter pane</button>
      <i class="thumb"></i>
    </div>
  </aside>

  <aside class="pane build">
    <header><h2>Build</h2><svg class="i16 dots"><use href="#dots3"/></svg><svg class="i16"><use href="#dbl-r"/></svg></header>
    <h3>Suggestions</h3>
    <div class="viz">
      <svg><use href="#bar-stack"/></svg><svg><use href="#col-stack"/></svg><svg><use href="#bar-clus"/></svg><svg><use href="#col-clus"/></svg><svg><use href="#bar-100"/></svg><svg><use href="#col-100"/></svg>
      <svg><use href="#line"/></svg><svg><use href="#area"/></svg><svg><use href="#area-stack"/></svg><svg><use href="#area-100"/></svg><svg><use href="#combo1"/></svg><svg><use href="#combo2"/></svg>
      <svg><use href="#ribbonc"/></svg><svg><use href="#waterfall"/></svg><svg><use href="#funnelc"/></svg><svg><use href="#scatter"/></svg><svg><use href="#pie"/></svg><svg><use href="#donut"/></svg>
      <svg><use href="#tree"/></svg><svg><use href="#globe"/></svg><svg><use href="#map"/></svg><svg><use href="#shapemap"/></svg><svg><use href="#azure"/></svg><svg><use href="#gauge"/></svg>
      <svg><use href="#card"/></svg><svg><use href="#mrow"/></svg><svg><use href="#kpi"/></svg><svg><use href="#slicer"/></svg><svg><use href="#grid"/></svg><svg><use href="#matrix"/></svg>
      <b>R</b><b>Py</b><svg><use href="#ki"/></svg><svg><use href="#decomp"/></svg><svg><use href="#qna"/></svg><svg><use href="#narr"/></svg>
      <svg><use href="#cup"/></svg><svg><use href="#pag"/></svg><svg><use href="#appcard"/></svg><svg><use href="#appslicer"/></svg><svg class="dots"><use href="#dots3"/></svg>
    </div>
    <h3>Data</h3>
    <div class="well"><button>+Add data</button></div>
  </aside>

  <aside class="pane data">
    <header><h2>Data</h2><svg class="i16 dots"><use href="#dots3"/></svg><svg class="i16"><use href="#dbl-r"/></svg></header>
    <label class="search"><svg class="i16"><use href="#mag"/></svg><input type="text" placeholder="Search" aria-label="Search data"></label>
    <ul>
      <li><svg class="i12 ch"><use href="#chev-r"/></svg><svg class="i14"><use href="#tbl"/></svg>Average order value</li>
      <li><svg class="i12 ch"><use href="#chev-r"/></svg><svg class="i14"><use href="#tbl"/></svg>average sales per pro...</li>
      <li><svg class="i12 ch"><use href="#chev-r"/></svg><svg class="i14"><use href="#tbl"/></svg>highest-selling produc...</li>
      <li><svg class="i12 ch"><use href="#chev-r"/></svg><svg class="i14"><use href="#tbl"/></svg>monthly sales totals fo...</li>
      <li><svg class="i12 ch"><use href="#chev-r"/></svg><svg class="i14"><use href="#tbl"/></svg>number of sales trans...</li>
      <li><svg class="i12 ch"><use href="#chev-r"/></svg><svg class="i14"><use href="#tbl"/></svg>percentage of total sal...</li>
      <li><svg class="i12 ch"><use href="#chev-r"/></svg><svg class="i14"><use href="#tbl"/></svg>products with no sales...</li>
      <li><svg class="i12 ch"><use href="#chev-r"/></svg><svg class="i14"><use href="#tbl"/></svg>salesdata</li>
      <li><svg class="i12 ch"><use href="#chev-r"/></svg><svg class="i14"><use href="#tbl"/></svg>top 5 customers by to...</li>
      <li><svg class="i12 ch"><use href="#chev-r"/></svg><svg class="i14"><use href="#tbl"/></svg>Top Selling Products</li>
      <li><svg class="i12 ch"><use href="#chev-r"/></svg><svg class="i14"><use href="#tbl"/></svg>total revenue by region</li>
      <li><svg class="i12 ch"><use href="#chev-r"/></svg><svg class="i14"><use href="#tbl"/></svg>total revenue per prod...</li>
      <li><svg class="i12 ch"><use href="#chev-r"/></svg><svg class="i14"><use href="#tbl"/></svg>Total Sales By Month</li>
      <li><svg class="i12 ch"><use href="#chev-r"/></svg><svg class="i14"><use href="#tbl"/></svg>Total Sales By Prodduct</li>
      <li><svg class="i12 ch"><use href="#chev-r"/></svg><svg class="i14"><use href="#tbl"/></svg>Total Sales By Region</li>
      <li><svg class="i12 ch"><use href="#chev-r"/></svg><svg class="i14"><use href="#tbl"/></svg>total sales for each pr...</li>
    </ul>
  </aside>

  <nav class="rrail">
    <button class="on" aria-label="Data"><svg class="i20"><use href="#db"/></svg></button>
    <button class="on" aria-label="Build"><svg class="i20" viewBox="0 0 20 20"><path d="M2.500 16.500v-9h4M6.500 16.500V1.500h5v5M2 16.500h7M12 5.500h3v3" fill="none" stroke="#484644"/><path d="M11.500 10v7c0 2 7 2 7 0v-7" fill="#fff" stroke="#d9730d" stroke-width="1.500"/><ellipse cx="15" cy="10" rx="3.500" ry="1.500" fill="#fff" stroke="#d9730d" stroke-width="1.500"/></svg></button>
    <button class="on" aria-label="Format"><svg class="i20" viewBox="0 0 20 20"><path d="M5 15.500H2.500v-8h4M6.500 13V1.500h5v8M12 5.500h4" fill="none" stroke="#484644"/><path d="M9 12l8-6 2 2-7 7z" fill="#fff" stroke="#484644"/><path d="M5 17c3 0 1-4 5-5l3 3c-1 4-5 4-8 2z" fill="#2b88d8"/></svg></button>
    <button aria-label="Bookmarks"><svg class="i20" viewBox="0 0 20 20"><path d="M8 18.500H2.500v-17h13V8M5.500 13V7.500h3V15M8.500 7.500v-3h3V9" fill="none" stroke="#484644"/><circle cx="14" cy="14" r="4.500" fill="#fff" stroke="#0f6cbd"/><path d="M14 14l2-2M12 8h4" stroke="#0f6cbd"/></svg></button>
    <button aria-label="Sync slicers"><svg class="i20" viewBox="0 0 20 20"><path d="M1 6c1-5 8-6 10-2M11 1v4H7M11 7c-2 4-7 4-9 0M1 10V7h4" fill="none" stroke="#20883d" stroke-width="1.500"/><path d="M12 1.500h6M12 4.500h6v4M2.500 12v6H12M5 14.500h4M10.500 10.500h9v2l-3 3v4l-3-2v-2l-3-3z" fill="none" stroke="#484644"/></svg></button>
    <button aria-label="Add"><svg class="i20" viewBox="0 0 20 20"><path d="M9.500 1v17M1 9.500h17" stroke="#252423"/></svg></button>
    <button class="gear" aria-label="Settings"><svg class="i20" viewBox="0 0 20 20"><path d="M8 1h4l1 3 2 1 3-1 2 4-2 2 2 3-2 3-3-1-2 1-1 3H8l-1-3-2-1-3 1-2-4 2-2-2-2 2-4 3 1 2-1z" fill="none" stroke="#484644" stroke-width="1.500"/><circle cx="10" cy="10" r="3" fill="none" stroke="#484644" stroke-width="1.500"/></svg></button>
  </nav>
</main>

<footer class="status"><span>Page 1 of 1</span><div class="zoomer"><span>-</span><input type="range" min="0" max="200" value="100" aria-label="Zoom"><span>+</span><span class="pct">100%</span><svg class="i16" viewBox="0 0 16 16"><rect x=".5" y="2.500" width="15" height="11" fill="none" stroke="#605e5c"/><path d="M3 7V5h3M10 5h3v2M13 9v2h-3M6 11H3V9" fill="none" stroke="#20883d"/></svg></div></footer>

<footer class="taskbar">
  <button class="start" aria-label="Start"><svg class="i16" viewBox="0 0 16 16"><path d="M0 2l7-1v6H0zM8 1l8-1v7H8zM0 8h7v6l-7-1zM8 8h8v8l-8-1z" fill="#fff"/></svg></button>
  <label class="find"><svg class="i16"><use href="#mag"/></svg><input type="text" placeholder="Type here to search" aria-label="Type here to search"></label>
  <div class="apps">
    <button aria-label="Cortana"><svg viewBox="0 0 24 24"><circle cx="12" cy="12" r="7" fill="none" stroke="#fff" stroke-width="2"/></svg></button>
    <button aria-label="Task view"><svg viewBox="0 0 24 24"><path d="M4.500 4v3h9V4M4.500 9.500h9v6h-9zM4.500 20v-3h9v3M17.500 4v16M16 9h3v3h-3z" fill="none" stroke="#fff" stroke-width="1.300"/></svg></button>
    <button aria-label="Drive"><svg viewBox="0 0 24 24"><path d="M8 2h7l8 14h-7z" fill="#fbbc04"/><path d="M8 2l4 7-7 13-4-6z" fill="#0f9d58"/><path d="M5 22l3-6h15l-4 6z" fill="#4285f4"/><path d="M16 16h7l-4 6z" fill="#ea4335"/></svg></button>
    <button aria-label="File Explorer"><svg viewBox="0 0 24 24"><path d="M2 3h8l2 3h10v15H2z" fill="#f5b83d"/><path d="M2 8h20v12H2z" fill="#ffd96a"/><path d="M6 14h12v7h-4v-3h-4v3H6z" fill="#3b8ed0"/></svg></button>
    <button aria-label="Edge"><svg viewBox="0 0 24 24"><path d="M2 11C4 3 9 1 13 1c6 0 10 5 9 12H9c0 5 7 6 12 3v5C13 25 4 22 4 14c0-4 3-6 5-7-3 0-5 2-7 4zm7-2h7c0-5-6-5-7 0z" fill="#1683d8"/></svg></button>
    <button aria-label="Store"><svg viewBox="0 0 24 24"><path d="M7 6V2h10v4" fill="none" stroke="#2fb5e8" stroke-width="2"/><path d="M1 5h22v18H1z" fill="#fff"/><path d="M7 9h4v4H7z" fill="#f25022"/><path d="M12 9h4v4h-4z" fill="#7fba00"/><path d="M7 14h4v4H7z" fill="#00a4ef"/><path d="M12 14h4v4h-4z" fill="#ffb900"/></svg></button>
    <button aria-label="Mail"><svg viewBox="0 0 24 24"><path d="M0 8l12-6 12 6v13H0z" fill="#fff"/><path d="M1 8h22L12 16z" fill="#001a2b"/><path d="M12 15l6 7-6-3z" fill="#001a2b"/></svg></button>
    <button aria-label="Zoom"><svg viewBox="0 0 24 24"><circle cx="12" cy="12" r="12" fill="#0b5cff"/><text x="12" y="16" text-anchor="middle" class="zm">zm</text></svg></button>
    <button aria-label="YouTube"><svg viewBox="0 0 24 24"><rect y="3" width="24" height="18" rx="4" fill="#f03"/><path d="M9 8l7 4-7 4z" fill="#fff"/></svg></button>
    <button class="run" aria-label="Excel"><svg viewBox="0 0 24 24"><path d="M7 1h16v21H7z" fill="#21a366"/><path d="M15 1h8v7h-8z" fill="#33c481"/><path d="M7 14h16v8H7z" fill="#185c37"/><path d="M0 6h13v12H0z" fill="#107c41"/><path d="M4 9l5 6M9 9l-5 6" stroke="#fff" stroke-width="2"/></svg></button>
    <button class="run cur-app" aria-label="Power BI"><svg viewBox="0 0 24 24"><path d="M13 0h8v24h-8z" fill="#d99a0b"/><path d="M8 6h8v18H8z" fill="#f2c12e"/><path d="M3 13h8v11H3z" fill="#fbe07a"/></svg></button>
  </div>
  <div class="tray">
    <span>Desktop</span><span class="rq">»</span>
    <svg class="i12"><use href="#chev-u"/></svg>
    <svg class="i16" viewBox="0 0 16 16"><path class="cur" d="M7 5.500h8.500v7h-9M1.500 2.500h4v3c0 2-4 2-4 0zM3.500 7.500v5M2.500 0v2M4.500 0v2"/></svg>
    <svg class="i16" viewBox="0 0 16 16"><circle class="cur" cx="7" cy="7" r="6.500"/><path class="cur" d="M.5 7h13M7 .5c-4 4-4 9 0 13M7 .5c4 4 4 9 0 13M2 3h10"/><circle cx="12" cy="12" r="3.500" fill="#001a2b" stroke="#fff"/><path class="cur" d="M10 10l4 4"/></svg>
    <svg class="i16" viewBox="0 0 16 16"><path class="cur" d="M.5 6h3l4-4v12l-4-4h-3zM9.500 5c1 2 1 4 0 6M11.500 4c2 2 2 6 0 8M13.500 2c3 4 3 8 0 12"/></svg>
    <time>5:40 PM<br>10/27/2024</time>
    <button class="note" aria-label="2 notifications"><svg class="i20" viewBox="0 0 20 20"><path d="M1 1h16v13H9l-3 3v-3H1z" fill="#fff"/><path d="M4 5h10M4 8h10M4 11h6" stroke="#001a2b"/></svg><em>2</em></button>
  </div>
</footer>
</body>
</html>
```
FILE: styles.css
```css
* { box-sizing: border-box; }
body { margin: 0; height: 100vh; display: flex; flex-direction: column; overflow: hidden; font: 12px/16px "Open Sans", "Noto Sans", sans-serif; color: #252423; background: #f3f2f1; }
button, input, select { font: inherit; color: inherit; background: none; border: 0; padding: 0; margin: 0; border-radius: 0; outline: 0; }
button { display: flex; align-items: center; justify-content: center; }
a { color: inherit; text-decoration: none; }
h2, h3, p, ul { margin: 0; padding: 0; font-weight: 400; font-size: 12px; }
svg { flex: none; display: block; }
.defs { display: none; }
.i8 { width: 8px; height: 8px; stroke-width: 3px; }
.i10 { width: 10px; height: 10px; stroke-width: 2px; }
.i12 { width: 12px; height: 12px; }
.i14 { width: 14px; height: 14px; }
.i16 { width: 16px; height: 16px; }
.i18 { width: 18px; height: 18px; }
.i20 { width: 20px; height: 20px; }
.i32 { width: 32px; height: 32px; }
.cur { fill: none; stroke: currentColor; }
.k { fill: none; stroke: #3b3a39; }
.w { fill: #fff; stroke: #3b3a39; }
.b { fill: #83beec; stroke: #0063b1; }
.g { fill: #c8c6c4; stroke: #797775; }
.bl { fill: none; stroke: #0f6cbd; }
.n123 { font: 8px "Open Sans", sans-serif; fill: #0f6cbd; }
.fx { font: italic 18px "Liberation Serif", serif; fill: #a19f9d; }
.dax { font: 7px "Open Sans", sans-serif; fill: #484644; }
.zm { font: bold 11px "Open Sans", sans-serif; fill: #fff; }

.titlebar { flex: none; height: 34px; background: #3b3a39; color: #fff; display: grid; grid-template-columns: 572fr 400fr 394fr; align-items: center; }
.tb-left { display: flex; align-items: center; padding-left: 17px; }
.tb-btn { width: 16px; margin-right: 14px; }
.tb-btn:nth-child(3) { margin-right: 9px; }
.doc { padding-top: 6px; }
.dim { color: #797775; }
.tri { width: 8px; height: 4px; margin-left: 6px; }
.tb-search { height: 24px; background: #d2d2d2; border-radius: 2px; color: #3b3a39; display: flex; align-items: center; gap: 12px; padding-left: 17px; font-size: 13px; }
input::placeholder { color: inherit; opacity: 1; }
.tb-search input, .search input, .find input { flex: 1; min-width: 0; }
.tb-search input { color: #0e5a4c; }
.tb-right { display: flex; align-items: center; justify-content: flex-end; }
.signin { margin-right: 9px; padding-top: 1px; }
.win { width: 44px; height: 34px; }
.tb-right .i20 { margin-right: 15px; }

.tabs { flex: none; height: 34px; background: #fafafa; display: flex; align-items: center; gap: 32px; padding: 0 6px 0 23px; font-size: 13px; }
.tabs a { height: 28px; padding-top: 5px; border-bottom: 3px solid transparent; }
.tabs a:first-child { margin-right: 6px; }
.tabs .on { font-weight: 600; border-color: #117865; }
.share { margin-left: auto; width: 84px; height: 24px; background: #117865; color: #fff; border-radius: 4px; gap: 7px; font-weight: 600; font-size: 12px; }
.share .i10 { margin-left: -4px; }

.ribbon { flex: none; height: 92px; background: #fafafa; display: flex; padding-top: 2px; box-shadow: 0 1px 4px #0003; position: relative; z-index: 2; }
.grp { height: 90px; border-right: 1px solid #d2d0ce; display: flex; flex-direction: column; justify-content: space-between; flex: none; }
.grp h2 { font-size: 10px; line-height: 13px; text-align: center; color: #3b3a39; }
.row { display: flex; justify-content: center; align-items: flex-start; }
.col { display: flex; flex-direction: column; padding-top: 1px; }
.g-clip { width: 81px; }
.g-data { width: 309px; }
.g-query { width: 117px; }
.g-insert { width: 409px; }
.g-calc { width: 176px; }
.g-sens { width: 74px; }
.g-share { width: 59px; }
.g-cop { width: 60px; }
.big { display: block; padding-top: 6px; min-width: 50px; color: #3b3a39; text-align: center; white-space: nowrap; }
.big .i32 { margin: 0 auto 2px; }
.big .i8 { display: inline-block; margin-left: 2px; }
.off { color: #bebbb8; }
.mini { height: 24px; width: 20px; }
.g-clip .row { justify-content: flex-start; padding-left: 6px; }
.g-clip .big { min-width: 44px; }
.g-data .row, .g-query .row, .g-insert .row { justify-content: flex-start; }
.g-data .row { padding-left: 3px; }
.c1 { width: 133px; }
.small { height: 24px; gap: 3px; justify-content: flex-start; color: #3b3a39; white-space: nowrap; }
.g-query .row { padding-left: 6px; }
.g-query .big:first-child { width: 60px; }
.g-query .big:last-child { min-width: 43px; }
.g-insert .row { padding-left: 3px; }
.gallery { display: flex; margin: 7px 0 0 -1px; width: 254px; height: 62px; border: 1px solid #8a8886; background: #fff; }
.gal { flex: 1; display: grid; grid-template-columns: repeat(9, 26px); grid-template-rows: 30px 28px; align-items: center; justify-items: center; padding-left: 1px; }
.gal svg { width: 16px; height: 16px; }
.more { width: 15px; height: 100%; border-left: 1px solid #8a8886; }
.b-text { min-width: 48px; }
.b-text + .big { min-width: 42px; }
.g-calc .row { gap: 2px; }
.g-calc .big { min-width: max-content; }
.collapse { margin: auto 4px 4px auto; }

main { flex: 1; min-height: 0; display: flex; }
.rail { width: 41px; background: #f3f2f1; border-right: 1px solid #e1dfdd; }
.rail button { width: 40px; height: 40px; }
.rail .on { border-left: 3px solid #117865; padding-right: 3px; }
.work { flex: 1; min-width: 0; display: flex; flex-direction: column; }
.stage-row { flex: 1; min-height: 0; display: flex; }
.stage { flex: 1; background: #fff; display: flex; justify-content: center; overflow: hidden; }
.filters { width: 33px; background: #fff; border-left: 1px solid #a19f9d; display: flex; flex-direction: column; align-items: center; padding-top: 11px; }
.filters .i16, .pane header .i16 { stroke-width: 1.3px; }
.filters .turn { transform: rotate(90deg); margin: 14px 0 7px 3px; stroke-width: 1.6px; }
.filters span { writing-mode: vertical-rl; font-size: 14px; font-weight: 600; }
.pages { height: 35px; display: flex; padding-left: 10px; }
.dev { width: 24px; height: 31px; margin-right: 20px; }
.dev.on { border-bottom: 3px solid #117865; }
.nav { width: 22px; height: 35px; }
.dev + .nav { margin-left: -13px; }
.ptab { width: 76px; background: #fff; border-left: 1px solid #a19f9d; border-bottom: 3px solid #117865; font-weight: 600; padding-top: 5px; }
.padd { width: 39px; background: #117865; }

.report { position: relative; flex: none; width: 508px; height: 508px; background: #333; box-shadow: 0 0 8px #0004; color: #1b0a14; }
.tile { position: absolute; background: #e667b9; border-radius: 1px; box-shadow: 0 0 2px #c3c3c366; overflow: hidden; }
.tile h3 { position: absolute; left: 0; right: 0; top: 0; font-size: 4px; line-height: 7px; font-weight: 700; text-align: center; white-space: nowrap; }
.tile .lt { font-weight: 600; font-size: 3px; }
.tile .tight { line-height: 5px; }
.tile > svg { width: 100%; height: 100%; }
.t { font: 700 4px "Open Sans", sans-serif; fill: #1b0a14; text-anchor: middle; }
.s { font-size: 3px; }
.s .n { font-size: 4px; }
.e { text-anchor: end; }
.l { text-anchor: start; }
.kpi p { font-size: 4px; line-height: 6px; font-weight: 600; text-align: center; padding-top: 19px; }
.low p { padding-top: 12px; }
.t1 { left: 3px; top: 3px; width: 376px; height: 13px; }
.t2 { left: 3px; top: 20px; width: 150px; height: 38px; }
.t3 { left: 164px; top: 20px; width: 91px; height: 38px; }
.t4 { left: 269px; top: 20px; width: 110px; height: 38px; }
.t5 { left: 387px; top: 3px; width: 61px; height: 26px; }
.t6 { left: 454px; top: 3px; width: 47px; height: 26px; }
.t7 { left: 3px; top: 62px; width: 99px; height: 95px; }
.t8 { left: 105px; top: 62px; width: 87px; height: 95px; }
.t9 { left: 205px; top: 62px; width: 174px; height: 95px; }
.t10 { left: 387px; top: 33px; width: 114px; height: 124px; }
.t11 { left: 4px; top: 167px; width: 98px; height: 81px; }
.t12 { left: 105px; top: 167px; width: 211px; height: 81px; }
.t13 { left: 328px; top: 167px; width: 173px; height: 81px; }
.t14 { left: 4px; top: 254px; width: 97px; height: 155px; }
.t15 { left: 105px; top: 255px; width: 274px; height: 154px; }
.t16 { left: 393px; top: 254px; width: 107px; height: 155px; }
.t17 { left: 4px; top: 417px; width: 194px; height: 76px; }
.t18 { left: 205px; top: 417px; width: 160px; height: 76px; }
.t19 { left: 372px; top: 417px; width: 129px; height: 76px; }
.tile table { border-collapse: collapse; margin: 6px 0 0 1px; font-size: 4px; line-height: 6px; font-weight: 700; white-space: nowrap; }
.tile th, .tile td { padding: 0; text-align: left; height: 6px; }
.tile td + td { text-align: right; }
.tile tr:nth-child(even) td { background: #e6e6e6; }
.tile th { background: #fff; height: 8px; vertical-align: top; border-bottom: 1px solid #c3b4e6; }
.tile .avg { font-size: 3px; line-height: 4px; width: 68px; margin-left: 0; }
.tile .avg td { height: 4px; background: #fff; }
.tile .avg th { height: 6px; }
.tile .avg tr:nth-child(odd) td { background: #ececec; }
.tile .one { width: 18px; }
.tile .one td, .tile .one tr:nth-child(even) td { background: #fff; }
.tile .one tr:nth-child(odd) td { background: #ececec; }
.tile .one th { height: 10px; }
.tile .two { width: 54px; margin-left: 0; }
.tile .rev { width: 59px; margin-left: 1px; }
.tile .rev th { background: none; border: 0; }
.cap { position: absolute; left: 2px; top: 5px; font-size: 3px; line-height: 5px; }
.opts { position: absolute; inset: 10px 2px 1px 1px; display: grid; grid-template-columns: 1fr 1fr; gap: 1px; background: #e5b4d4; }
.opts button { background: #fff; font-size: 4px; line-height: 5px; font-weight: 700; min-width: 0; }

.pane { width: 181px; flex: none; border-left: 1px solid #e1dfdd; padding: 0 8px; display: flex; flex-direction: column; min-height: 0; }
.pane header { height: 38px; display: flex; align-items: center; flex: none; }
.pane header h2 { font-size: 15px; font-weight: 600; flex: 1; }
.dots { color: #3a4a6b; }
.pane header .dots { margin-right: 6px; }
.pane header .i16:last-child { margin-right: -2px; color: #605e5c; }
.search { height: 27px; flex: none; border: 1px solid #605e5c; border-radius: 2px; display: flex; align-items: center; gap: 4px; padding-left: 7px; font-size: 13px; color: #484644; }
.format .search { margin-top: 3px; }
.scroll { position: relative; flex: 1; min-height: 0; overflow: hidden; margin: 12px -8px 0; }
.sec { width: 100%; height: 41px; justify-content: flex-start; gap: 3px; padding: 2px 0 0 7px; font-weight: 600; border-bottom: 1px solid #e1dfdd; color: #252423; }
.sec .i14 { stroke-width: 1.5px; }
.sec.open { height: 41px; border: 0; }
.body { background: #e1dfdd; padding: 7px 8px 0; height: 264px; }
.cardbox { height: 217px; background: #f3f2f1; border-radius: 4px; box-shadow: 0 1px 3px #0003; padding: 8px; display: grid; grid-template-rows: repeat(3, 20px 32px) 20px 24px; }
.cardbox label { line-height: 19px; }
.sel, .num { height: 24px; border: 1px solid #8a8886; border-radius: 2px; background: #fff; display: flex; align-items: center; color: #605e5c; }
.sel select { appearance: none; flex: 1; height: 22px; padding: 1px 0 0 8px; }
.sel .i14 { margin-right: 5px; color: #252423; pointer-events: none; stroke-width: 1.4px; }
.num { width: 70px; }
.num input { width: 50px; padding: 1px 0 0 4px; }
.num span { margin-left: auto; margin-right: 1px; }
.num .i10 { stroke-width: 1.4px; }
.reset { margin: 13px 0 0 2px; gap: 6px; color: #3b3a39; }
.reset .i12 { color: #484644; }
.thumb { position: absolute; right: 0; top: 0; width: 6px; height: 405px; border-radius: 3px; background: #0000001f; }

.build h3 { line-height: 16px; }
.viz { flex: none; margin-top: 3px; height: 188px; border: 1px solid #8a8886; border-radius: 2px; background: #fff; display: grid; grid-template-columns: repeat(6, 26px); grid-auto-rows: 26px; justify-content: center; align-items: center; justify-items: center; padding-top: 2px; color: #117abf; }
.viz svg { width: 18px; height: 18px; }
.viz b { font-size: 16px; }
.viz .dots { color: #484644; }
.build h3:nth-of-type(2) { margin-top: 9px; }
.well { margin-top: 3px; height: 40px; border: 1px dashed #484644; padding: 4px; border-radius: 2px; }
.well button { width: 100%; height: 30px; border: 1px solid #484644; border-radius: 2px; background: #fff; padding-top: 2px; }

.data { padding: 0 4px; }
.data header { padding: 0 4px; }
.data .search { margin-top: 7px; gap: 6px; }
.data ul { list-style: none; padding: 10px 0 0 8px; }
.data li { height: 24px; display: flex; align-items: center; white-space: nowrap; color: #3b3a39; gap: 4px; }
.ch { color: #797775; stroke-width: 1.5px; }
.rrail { width: 33px; flex: none; background: #fafafa; border-left: 1px solid #e1dfdd; display: flex; flex-direction: column; }
.rrail button { width: 32px; height: 32px; }
.rrail .on { height: 31px; background: #e1dfdd; border: 1px solid #605e5c; }
.rrail .gear { margin-top: auto; border-top: 1px solid #e1dfdd; }

.status { flex: none; height: 24px; border-top: 1px solid #e1dfdd; display: flex; justify-content: space-between; align-items: center; padding: 2px 18px 0 4px; color: #605e5c; }
.zoomer { display: flex; align-items: center; gap: 4px; }
.zoomer input { appearance: none; width: 100px; height: 12px; background: linear-gradient(#605e5c, #605e5c) center / 100% 1px no-repeat; }
.zoomer input::-webkit-slider-thumb { appearance: none; width: 3px; height: 11px; background: #605e5c; }
.pct { margin: 0 8px 0 10px; }
.zoomer input + span { margin-left: 2px; }

.taskbar { flex: none; height: 41px; background: linear-gradient(90deg, #001a26, #04162b 60%, #00101f); color: #fff; display: flex; }
.start { width: 48px; }
.find { width: 344px; background: #f2f2f2; border: 1px solid #c8c8c8; color: #3b3a39; display: flex; align-items: center; gap: 11px; padding: 2px 0 0 12px; font-size: 14px; }
.apps { display: flex; }
.apps button { width: 49px; }
.apps svg { width: 24px; height: 24px; }
.apps .run { border-bottom: 3px solid #76c893; padding-top: 3px; width: 40px; margin: 0 5px; }
.apps .cur-app { width: 47px; margin: 0; background: #3c4b56; }
.tray { margin-left: auto; display: flex; align-items: center; gap: 8px; padding-right: 19px; font-size: 11px; }
.tray .i12 { stroke-width: 2px; }
.rq { font-size: 16px; align-self: flex-start; }
.tray time { text-align: center; line-height: 18px; }
.note { margin-left: 8px; position: relative; }
.note em { position: absolute; left: 7px; top: 6px; width: 16px; height: 16px; border-radius: 8px; background: #333; border: 1px solid #797775; font: 10px/14px "Open Sans", sans-serif; text-align: center; }
```
